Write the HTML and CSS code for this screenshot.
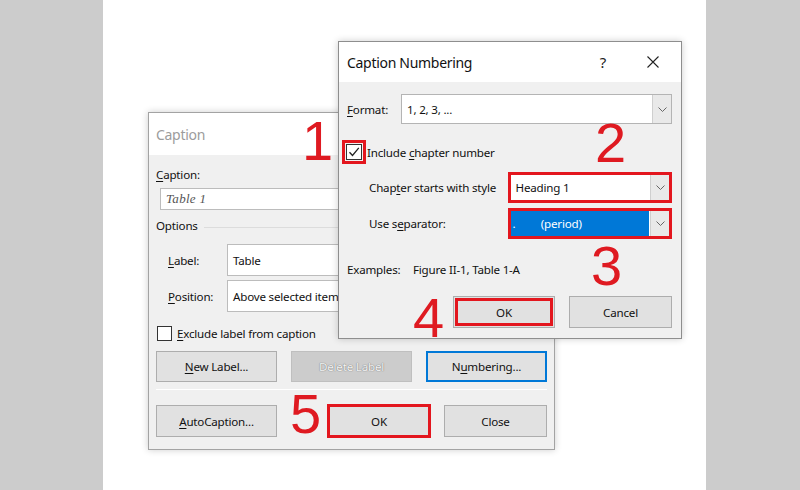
FILE: index.html
```html
<!DOCTYPE html>
<html>
<head>
<meta charset="utf-8">
<link rel="stylesheet" href="styles.css">
</head>
<body>
<div class="canvas">
  <div class="side"></div>
  <div class="paper"></div>
  <div class="side"></div>

  <section class="dlg caption-dlg">
    <header class="titlebar inactive">Caption</header>
    <div class="body cap-body">
      <div class="lbl"><u>C</u>aption:</div>
      <div class="input cap-input">Table 1</div>
      <div class="group"><span>Options</span><i class="rule"></i></div>
      <div class="row first"><span class="rl"><u>L</u>abel:</span><div class="input grow">Table</div></div>
      <div class="row"><span class="rl"><u>P</u>osition:</span><div class="input grow">Above selected item</div></div>
      <div class="check excl"><span class="box"></span><span><u>E</u>xclude label from caption</span></div>
      <div class="btnrow three">
        <div class="btn w121"><span><u>N</u>ew Label...</span></div>
        <div class="btn w121 disabled">Delete Label</div>
        <div class="btn w121 focus">N<u>u</u>mbering...</div>
      </div>
      <div class="sep"></div>
      <div class="btnrow split">
        <div class="btn w121"><span><u>A</u>utoCaption...</span></div>
        <div class="right">
          <div class="btn w102 marked-cap">OK</div>
          <div class="btn w103">Close</div>
        </div>
      </div>
    </div>
  </section>

  <section class="dlg num-dlg">
    <header class="titlebar">
      <span class="title">Caption Numbering</span>
      <span class="help">?</span>
      <svg class="close" width="12" height="12" viewBox="0 0 12 12"><path d="M0.5 0.5L11.5 11.5M11.5 0.5L0.5 11.5" stroke="#222" stroke-width="1.1" fill="none"/></svg>
    </header>
    <div class="body num-body">
      <div class="frow">
        <span class="flbl"><u>F</u>ormat:</span>
        <div class="select grow"><span class="val">1, 2, 3, ...</span><span class="drop"><svg width="9" height="5" viewBox="0 0 9 5"><path d="M0.5 0.5L4.5 4.5L8.5 0.5" stroke="#666" fill="none"/></svg></span></div>
      </div>
      <div class="check incl">
        <span class="box checked"><svg width="14" height="14" viewBox="0 0 14 14"><path d="M2.5 7.2L5.5 10.5L11.8 2.8" stroke="#222" stroke-width="1.3" fill="none"/></svg></span>
        <span>Include <u>c</u>hapter number</span>
      </div>
      <div class="crow">
        <span class="clbl">Chap<u>t</u>er starts with style</span>
        <div class="select red"><span class="val">Heading 1</span><span class="drop"><svg width="9" height="5" viewBox="0 0 9 5"><path d="M0.5 0.5L4.5 4.5L8.5 0.5" stroke="#666" fill="none"/></svg></span></div>
      </div>
      <div class="crow second">
        <span class="clbl">Use s<u>e</u>parator:</span>
        <div class="select red"><span class="val sel">.&nbsp;&nbsp;&nbsp;&nbsp;&nbsp;&nbsp;&nbsp;&nbsp;&nbsp;(period)</span><span class="drop"><svg width="9" height="5" viewBox="0 0 9 5"><path d="M0.5 0.5L4.5 4.5L8.5 0.5" stroke="#666" fill="none"/></svg></span></div>
      </div>
      <div class="examples"><span class="exl">Examples:</span><span>Figure II-1, Table 1-A</span></div>
      <div class="btnrow endrow">
        <div class="btn w102 marked-num">OK</div>
        <div class="btn w103">Cancel</div>
      </div>
    </div>
  </section>

  <span class="num n1">1</span>
  <span class="num n2">2</span>
  <span class="num n3">3</span>
  <span class="num n4">4</span>
  <span class="num n5">5</span>
</div>
</body>
</html>
```

FILE: styles.css
```css
* { box-sizing: border-box; margin: 0; padding: 0; }
html, body { width: 800px; height: 490px; overflow: hidden; }
body {
  font-family: "Segoe UI", "Noto Sans", "Open Sans", sans-serif;
  font-size: 11.6px;
  letter-spacing: -0.2px;
  color: #111;
}
u { text-decoration-thickness: 1px; text-underline-offset: 2px; }

.canvas {
  position: relative;
  width: 800px;
  height: 490px;
  display: grid;
  grid-template-columns: 103px 603px 94px;
}
.side { background: #cccccc; }
.paper { background: #ffffff; }

.dlg {
  position: absolute;
  background: #f0f0f0;
  border: 1px solid #a3a3a3;
  box-shadow: 0 0 7px rgba(0, 0, 0, 0.2);
  display: flex;
  flex-direction: column;
}
.caption-dlg { left: 148px; top: 112px; width: 407px; height: 338px; }
.num-dlg { left: 338px; top: 41px; width: 344px; height: 298px; border-color: #8e8e8e; }

.titlebar {
  background: #fff;
  display: flex;
  align-items: center;
  font-size: 14px;
  letter-spacing: -0.3px;
  color: #111;
}
.caption-dlg .titlebar { height: 42px; padding-left: 7px; color: #9c9c9c; }
.num-dlg .titlebar { height: 40px; padding-left: 8px; }
.num-dlg .title { flex: 1; }
.help { font-size: 15px; margin-right: 41px; color: #222; }
.close { margin-right: 22px; }

.body { display: flex; flex-direction: column; flex: 1; }
.cap-body { padding: 12px 7px 0 7px; }
.num-body { padding: 12px 9px 0 8px; }

/* caption dialog */
.lbl { line-height: 16px; }
.cap-input {
  margin-top: 5px;
  margin-left: 4px;
  height: 22px;
  font-family: "Liberation Serif", "DejaVu Serif", serif;
  font-style: italic;
  font-size: 13px;
  letter-spacing: 0.3px;
  color: #555;
}
.input {
  background: #fff;
  border: 1px solid #bcbcbc;
  display: flex;
  align-items: center;
  padding-left: 5px;
}
.group { margin-top: 8px; display: flex; align-items: center; line-height: 16px; }
.rule { flex: 1; height: 1px; background: #dcdcdc; margin-left: 6px; margin-top: 2px; }
.row { display: flex; align-items: stretch; height: 32px; margin-top: 4px; }
.row.first { margin-top: 10px; }
.rl { width: 71px; padding-left: 12px; display: flex; align-items: center; }
.grow { flex: 1; }

.check { display: flex; align-items: center; }
.box {
  width: 15px; height: 15px;
  background: #fff;
  border: 1px solid #333;
  display: flex; align-items: center; justify-content: center;
}
.excl { margin-top: 14px; margin-left: 1px; }
.excl .box { margin-right: 5px; }

.btnrow { display: flex; gap: 14px; }
.btnrow.three { margin-top: 10px; }
.btnrow.split { justify-content: space-between; margin-top: 15px; }
.btnrow .right { display: flex; gap: 14px; }
.btn {
  height: 32px;
  background: #e1e1e1;
  border: 1px solid #adadad;
  display: flex; align-items: center; justify-content: center;
}
.w121 { width: 121px; }
.w102 { width: 102px; }
.w103 { width: 103px; }
.three .btn { height: 31px; }
.btn.disabled {
  background: #cccccc;
  border-color: #bfbfbf;
  color: #f2f2f2;
  text-shadow: 0 0 1px #7a7a7a, 0 0 1px #8a8a8a;
}
.btn.focus { border-color: #0078d7; box-shadow: inset 0 0 0 1px #0078d7; }
.sep { height: 1px; background: #dadada; margin-top: 7px; border-bottom: 1px solid #fff; }
.marked-cap { outline: 3px solid #e3161e; outline-offset: -2px; }

/* numbering dialog */
.frow { display: flex; height: 30px; }
.flbl { width: 54px; display: flex; align-items: center; }
.select {
  height: 30px;
  background: #fff;
  border: 1px solid #b4b4b4;
  display: flex;
}
.val { flex: 1; display: flex; align-items: center; padding-left: 5px; }
.drop {
  width: 19px;
  background: #e9e9e9;
  border-left: 1px solid #cfcfcf;
  display: flex; align-items: center; justify-content: center;
}
.select.red { border: 3px solid #e3161e; }
.val.sel {
  background: #0078d7;
  color: #fff;
  margin: 0 1px 0 0;
  padding-left: 2px;
}
.incl { margin-top: 20px; height: 16px; }
.incl .box {
  width: 16px; height: 16px;
  margin-left: -1px; margin-right: 5px;
  outline: 3px solid #e3161e; outline-offset: 1px;
}
.crow { display: flex; margin-top: 12px; }
.crow.second { margin-top: 5px; }
.clbl { width: 161px; padding-left: 22px; display: flex; align-items: center; }
.crow .select { width: 165px; height: 31px; }
.examples { margin-top: 23px; line-height: 16px; display: flex; }
.exl { width: 66px; }
.endrow { justify-content: flex-end; margin-top: 18px; }
.marked-num { outline: 3px solid #e3161e; outline-offset: -5px; }

/* annotations */
.num {
  position: absolute;
  font-family: "Liberation Sans", Arial, sans-serif;
  font-size: 56px;
  line-height: 56px;
  letter-spacing: 0;
  color: #df1a21;
}
.n1 { left: 302px; top: 113px; }
.n2 { left: 595px; top: 115px; }
.n3 { left: 591px; top: 238px; }
.n4 { left: 413px; top: 290px; }
.n5 { left: 290px; top: 386px; }
```
